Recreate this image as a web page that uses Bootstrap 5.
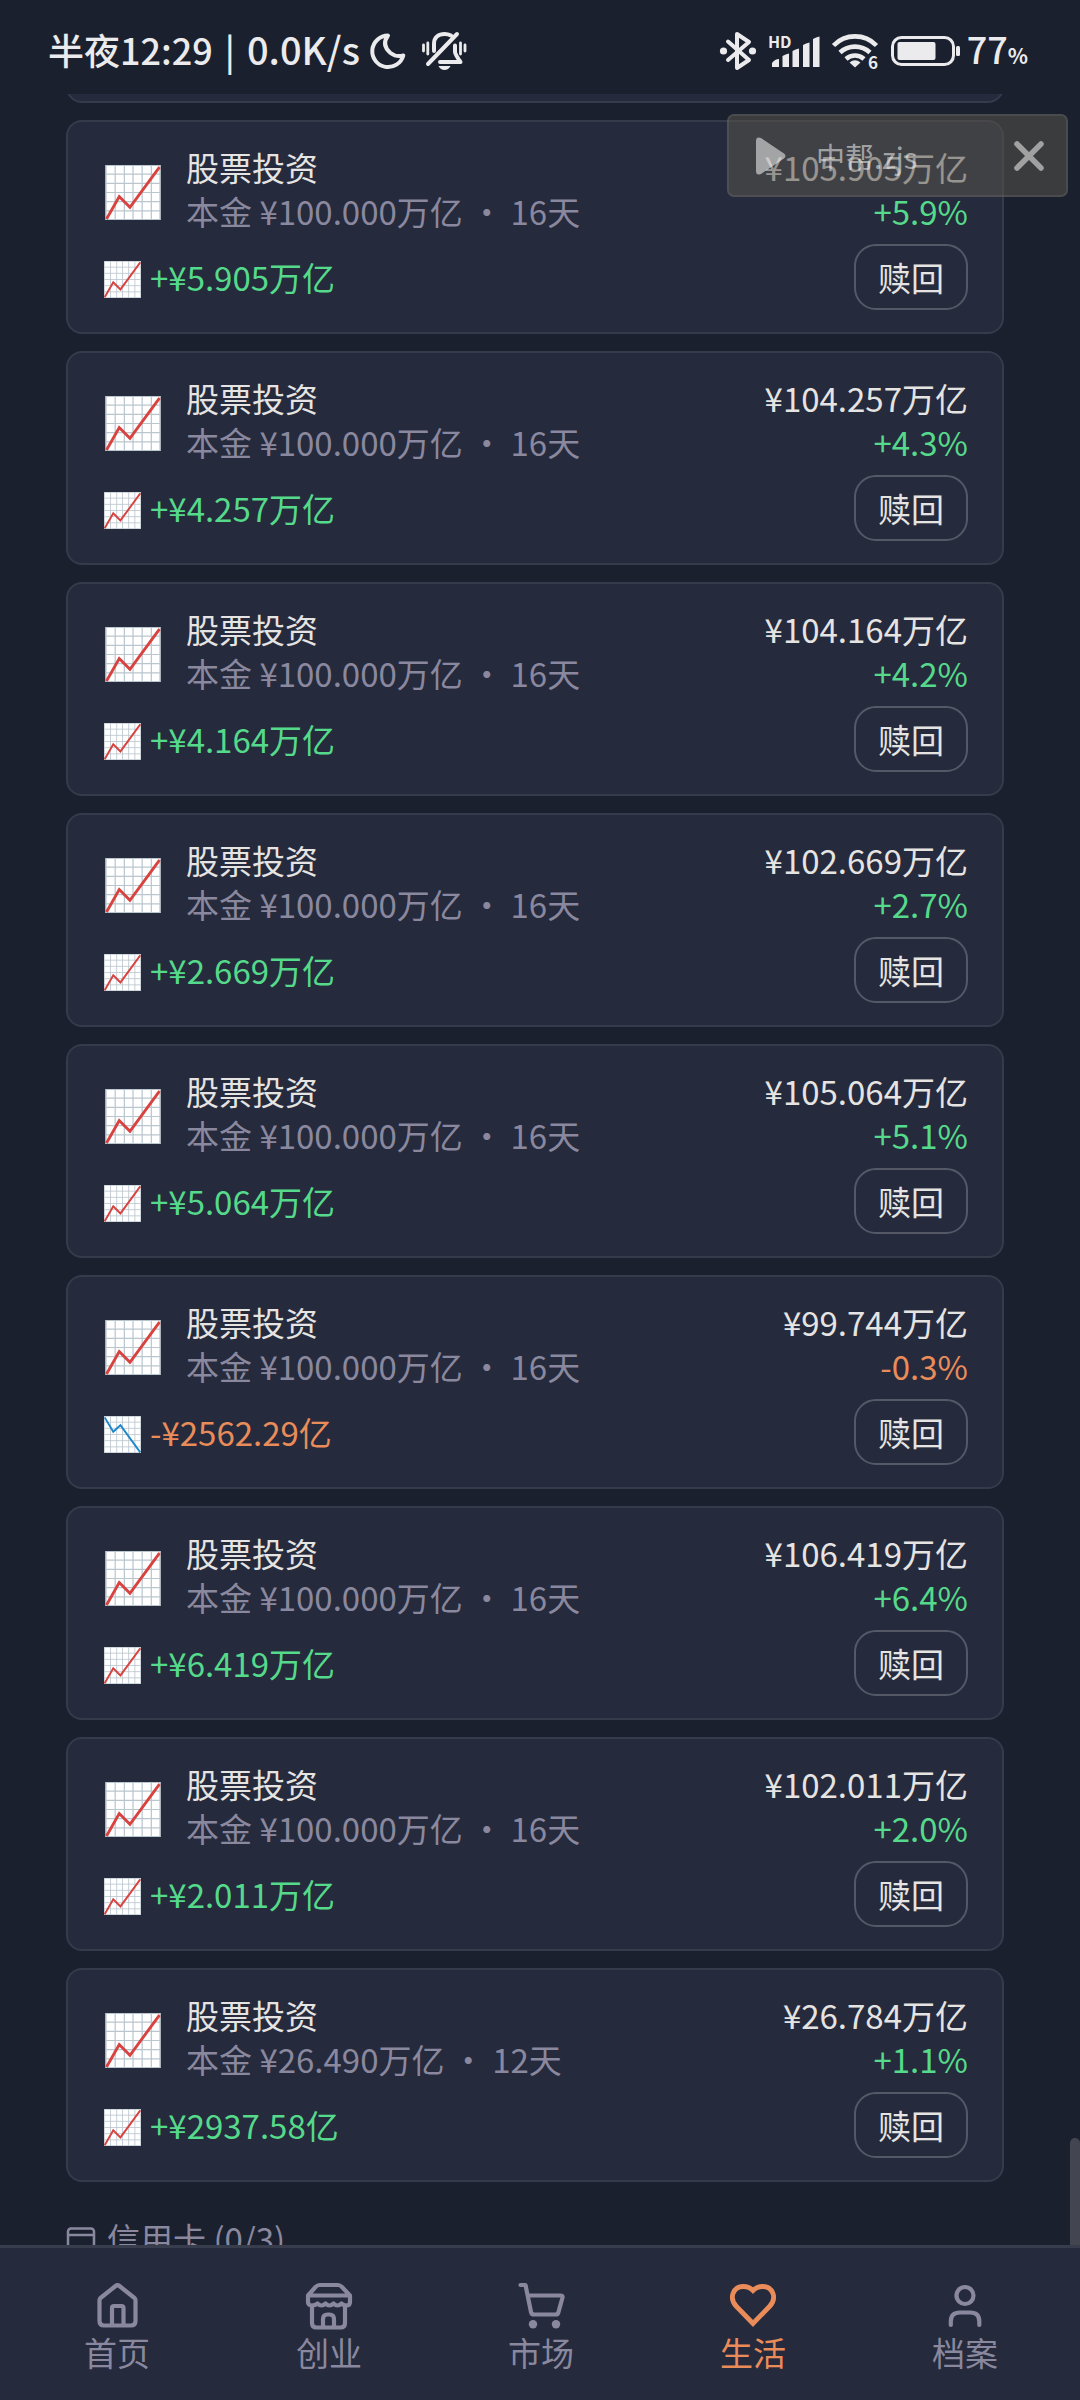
<!DOCTYPE html>
<html lang="zh-CN">
<head>
<meta charset="utf-8">
<meta name="viewport" content="width=device-width, initial-scale=1">
<title>生活</title>
<link href="https://cdn.jsdelivr.net/npm/bootstrap@5.3.0/dist/css/bootstrap.min.css" rel="stylesheet">
<style>
:root{--ink:#e6e4e2;--muted:#8a889e;--gain:#55d98a;--loss:#e98c5a;--panel:#252a3c;--line:#363b4b}
body{background:#1a202d;color:var(--ink);font:400 33px/44px "Noto Sans CJK SC",sans-serif}
svg{display:block;flex:none;overflow:visible}
.status-strip{height:94px;padding:8px 52px 0 48px;font-weight:500;font-size:36px;color:#ebebed}
.status-strip text{font-weight:700;font-family:"Noto Sans CJK SC",sans-serif}
.status-net{font-size:38px}
.status-clock{gap:12px;margin-top:-4px}
.status-left{gap:11px}
.status-left svg + svg{margin-left:5px}
.status-right{gap:13px}
.status-level{margin-left:-6px}
.status-pct{font-size:21px;font-weight:700}
.holdings{padding:0 76px 0 66px}
.holding{background:var(--panel);border:2px solid var(--line);border-radius:16px;padding:23px 34px 22px;margin-bottom:17px}
.holding-prev{height:214px;margin-top:-205px}
.holding-head{gap:22px;margin-bottom:11px}
.holding-head svg{width:62px;height:55px;margin-top:6px}
.profit{gap:9px;padding-left:2px}
.profit svg{width:37px;height:37px;margin-top:5px}
.muted-text{color:var(--muted)}
.gain{color:var(--gain)}
.loss{color:var(--loss)}
.btn-redeem{height:66px;padding:0 22px;border:2px solid #555867;border-radius:22px;color:var(--ink);font-size:33px;line-height:44px}
.btn-redeem:hover{color:#fff;border-color:var(--muted)}
.section-title{font-size:33px;line-height:44px;font-weight:400;color:var(--muted);margin:34px 0 0;gap:12px}
.thumb{right:0;bottom:0;width:10px;height:107px;border-radius:5px 5px 0 0;background:#434650}
.tabs{height:155px;background:var(--panel);border-top:3px solid #383d4e;padding:34px 9px 0 11px}
.tabs a{color:var(--muted);text-decoration:none}
.tabs a.active{color:var(--loss)}
.tabs svg{width:48px;height:48px}
.float-tip{top:114px;right:12px;width:341px;height:83px;z-index:3;border-radius:7px;border:2px solid rgba(255,255,255,.08);background:rgba(88,83,77,.55);color:rgba(255,255,255,.52);font-size:29px;padding:0 22px 0 27px}
.tip-name{margin-left:30px}
.tip-close{color:inherit;background:none;border:0;padding:0}
</style>
</head>
<body>
<svg width="0" height="0" class="position-absolute" aria-hidden="true">
<symbol id="up" viewBox="0 0 54 54"><path fill="#fff" d="M0 0h54v54H0z"/><path d="M.5 0v54M9.500 0v54M18.500 0v54M27 0v54M36 0v54M45 0v54M53.500 0v54M0 .5h54M0 9h54M0 18h54M0 27h54M0 36h54M0 45h54M0 53.500h54" stroke="#b9c6cd" stroke-width="1.200"/><path d="M1 53 13.500 31 24 41.500 53 2" fill="none" stroke="#d8423f" stroke-width="2.800"/></symbol>
<symbol id="down" viewBox="0 0 54 54"><path fill="#fff" d="M0 0h54v54H0z"/><path d="M.5 0v54M9.500 0v54M18.500 0v54M27 0v54M36 0v54M45 0v54M53.500 0v54M0 .5h54M0 9h54M0 18h54M0 27h54M0 36h54M0 45h54M0 53.500h54" stroke="#b9c6cd" stroke-width="1.200"/><path d="M1 2 13.500 23 24 13.500 53 53" fill="none" stroke="#1d87c9" stroke-width="2.800"/></symbol>
</svg>

<div class="d-flex flex-column vh-100 position-relative overflow-hidden">
<header class="status-strip d-flex justify-content-between align-items-center flex-shrink-0">
<div class="status-left d-flex align-items-center">
<div class="status-clock d-flex"><span>半夜12:29</span><span>|</span><span class="status-net">0.0K/s</span></div>
<svg width="35" height="36" viewBox="0 0 35 36" fill="none" stroke="currentColor" stroke-width="4" stroke-linecap="round" stroke-linejoin="round"><path d="M17 2.500A15.800 15.800 0 1 0 32.300 22.500Q25.500 24.500 19.500 20Q10 12 17 2.500z"/></svg>
<svg width="45" height="40" viewBox="0 0 45 40" fill="none" stroke="currentColor" stroke-width="4" stroke-linecap="round" stroke-linejoin="round"><path d="M35 3 6 33M12 20V13C12 6 17 3 22.500 3Q26 3 29 4.500M33 14.500V21Q33.500 24 38.500 31H18"/><path d="M1.500 14v6M5.800 12v11M38.500 12v11M43 14v6" stroke-width="2.800"/><path d="M16.500 35h12q-2 4-6 4t-6-4z" fill="currentColor" stroke="none"/></svg>
</div>
<div class="status-right d-flex align-items-center">
<svg width="36" height="38" viewBox="0 0 36 38" fill="none" stroke="currentColor" stroke-width="4" stroke-linejoin="round" stroke-linecap="round"><path d="M8 9.500 29 28 17 36V2L29 10 8 28"/><circle cx="3.500" cy="19" r="3.600" fill="currentColor" stroke="none"/><circle cx="32.500" cy="19" r="3.600" fill="currentColor" stroke="none"/></svg>
<svg width="50" height="34" viewBox="0 0 50 34" fill="currentColor"><text x="-1" y="14" font-size="16">HD</text><path d="M3 33v-4q3-4 7-4v8zM13.500 33V22q3-2 6.500-2.500V33zM23.500 33V17q3-2 6.500-2.500V33zM34 33V11q3-2 6.500-2.500V33zM44 33V5q3-2 6.500-2.500V33z"/></svg>
<svg width="46" height="36" viewBox="0 0 46 36" fill="none" stroke="currentColor" stroke-width="4.600"><path d="M1.500 12.500A30 30 0 0 1 44.500 12.500M8 19.500A22 22 0 0 1 38 19.500M14 26A13.500 13.500 0 0 1 32 26"/><path d="M23 34.500 17.500 29.500Q23 25 28.500 29.500z" fill="currentColor" stroke="none"/><text x="36" y="36" font-size="17" fill="currentColor" stroke="none">6</text></svg>
<svg width="69" height="30" viewBox="0 0 69 30"><rect x="1.500" y="1.500" width="61" height="27" rx="9" fill="none" stroke="currentColor" stroke-width="3"/><rect x="6.500" y="6" width="38" height="18" rx="2" fill="currentColor"/><rect x="65" y="10" width="4" height="10" rx="1.500" fill="currentColor"/></svg>
<span class="status-level">77<span class="status-pct">%</span></span>
</div>
</header>

<main class="holdings flex-grow-1 overflow-hidden position-relative">
<div class="holding holding-prev"></div>

<article class="holding"><div class="holding-head d-flex align-items-center"><svg><use href="#up"/></svg><div class="flex-grow-1"><div>股票投资</div><div class="muted-text">本金 ¥100.000万亿 • 16天</div></div><div class="text-end"><div>¥105.905万亿</div><div class="gain">+5.9%</div></div></div><div class="d-flex justify-content-between align-items-center"><div class="profit gain d-flex align-items-center"><svg><use href="#up"/></svg><span>+¥5.905万亿</span></div><button type="button" class="btn btn-redeem">赎回</button></div></article>

<article class="holding"><div class="holding-head d-flex align-items-center"><svg><use href="#up"/></svg><div class="flex-grow-1"><div>股票投资</div><div class="muted-text">本金 ¥100.000万亿 • 16天</div></div><div class="text-end"><div>¥104.257万亿</div><div class="gain">+4.3%</div></div></div><div class="d-flex justify-content-between align-items-center"><div class="profit gain d-flex align-items-center"><svg><use href="#up"/></svg><span>+¥4.257万亿</span></div><button type="button" class="btn btn-redeem">赎回</button></div></article>

<article class="holding"><div class="holding-head d-flex align-items-center"><svg><use href="#up"/></svg><div class="flex-grow-1"><div>股票投资</div><div class="muted-text">本金 ¥100.000万亿 • 16天</div></div><div class="text-end"><div>¥104.164万亿</div><div class="gain">+4.2%</div></div></div><div class="d-flex justify-content-between align-items-center"><div class="profit gain d-flex align-items-center"><svg><use href="#up"/></svg><span>+¥4.164万亿</span></div><button type="button" class="btn btn-redeem">赎回</button></div></article>

<article class="holding"><div class="holding-head d-flex align-items-center"><svg><use href="#up"/></svg><div class="flex-grow-1"><div>股票投资</div><div class="muted-text">本金 ¥100.000万亿 • 16天</div></div><div class="text-end"><div>¥102.669万亿</div><div class="gain">+2.7%</div></div></div><div class="d-flex justify-content-between align-items-center"><div class="profit gain d-flex align-items-center"><svg><use href="#up"/></svg><span>+¥2.669万亿</span></div><button type="button" class="btn btn-redeem">赎回</button></div></article>

<article class="holding"><div class="holding-head d-flex align-items-center"><svg><use href="#up"/></svg><div class="flex-grow-1"><div>股票投资</div><div class="muted-text">本金 ¥100.000万亿 • 16天</div></div><div class="text-end"><div>¥105.064万亿</div><div class="gain">+5.1%</div></div></div><div class="d-flex justify-content-between align-items-center"><div class="profit gain d-flex align-items-center"><svg><use href="#up"/></svg><span>+¥5.064万亿</span></div><button type="button" class="btn btn-redeem">赎回</button></div></article>

<article class="holding"><div class="holding-head d-flex align-items-center"><svg><use href="#up"/></svg><div class="flex-grow-1"><div>股票投资</div><div class="muted-text">本金 ¥100.000万亿 • 16天</div></div><div class="text-end"><div>¥99.744万亿</div><div class="loss">-0.3%</div></div></div><div class="d-flex justify-content-between align-items-center"><div class="profit loss d-flex align-items-center"><svg><use href="#down"/></svg><span>-¥2562.29亿</span></div><button type="button" class="btn btn-redeem">赎回</button></div></article>

<article class="holding"><div class="holding-head d-flex align-items-center"><svg><use href="#up"/></svg><div class="flex-grow-1"><div>股票投资</div><div class="muted-text">本金 ¥100.000万亿 • 16天</div></div><div class="text-end"><div>¥106.419万亿</div><div class="gain">+6.4%</div></div></div><div class="d-flex justify-content-between align-items-center"><div class="profit gain d-flex align-items-center"><svg><use href="#up"/></svg><span>+¥6.419万亿</span></div><button type="button" class="btn btn-redeem">赎回</button></div></article>

<article class="holding"><div class="holding-head d-flex align-items-center"><svg><use href="#up"/></svg><div class="flex-grow-1"><div>股票投资</div><div class="muted-text">本金 ¥100.000万亿 • 16天</div></div><div class="text-end"><div>¥102.011万亿</div><div class="gain">+2.0%</div></div></div><div class="d-flex justify-content-between align-items-center"><div class="profit gain d-flex align-items-center"><svg><use href="#up"/></svg><span>+¥2.011万亿</span></div><button type="button" class="btn btn-redeem">赎回</button></div></article>

<article class="holding"><div class="holding-head d-flex align-items-center"><svg><use href="#up"/></svg><div class="flex-grow-1"><div>股票投资</div><div class="muted-text">本金 ¥26.490万亿 • 12天</div></div><div class="text-end"><div>¥26.784万亿</div><div class="gain">+1.1%</div></div></div><div class="d-flex justify-content-between align-items-center"><div class="profit gain d-flex align-items-center"><svg><use href="#up"/></svg><span>+¥2937.58亿</span></div><button type="button" class="btn btn-redeem">赎回</button></div></article>

<h2 class="section-title d-flex align-items-center"><svg width="29" height="22" viewBox="0 0 29 22" fill="none" stroke="currentColor" stroke-width="2.500"><rect x="2" y="1.500" width="26" height="18.500" rx="3"/><path d="M2 8h26"/></svg><span>信用卡 (0/3)</span></h2>
<div class="thumb position-absolute"></div>
</main>

<nav class="tabs d-flex flex-shrink-0" aria-label="主导航">
<a href="#" class="d-flex flex-column align-items-center flex-fill w-100"><svg viewBox="0 0 48 48" fill="none" stroke="currentColor" stroke-width="4.200" stroke-linejoin="round" stroke-linecap="round"><path d="M6.500 18q0-1 1-2L22.500 4q2-1.500 4 0L41.500 16q1 1 1 2V39q0 4.500-4.500 4.500H11q-4.500 0-4.500-4.500z"/><path d="M19 43V26q0-2 2-2h7.500q2 0 2 2v17"/></svg><span>首页</span></a>
<a href="#" class="d-flex flex-column align-items-center flex-fill w-100"><svg viewBox="0 0 48 48" fill="none" stroke="currentColor" stroke-width="4.200" stroke-linejoin="round" stroke-linecap="round"><path d="M3 13.500 10.500 5q2-2 4-2h18.500q2 0 4 2L45 13.500V20q0 3.500-3.500 3.500-3 0-5-2-2 2-4 2t-4-2q-2 2-4 2t-4-2q-2 2-4 2t-4-2q-2 2-6 2-3.500 0-3.500-3.500zH45"/><path d="M7 24v17q0 4.500 4.500 4.500h24q4.500 0 4.500-4.500V24M18 45V37q0-4.500 4.500-4.500h2q4.500 0 4.500 4.500v8"/></svg><span>创业</span></a>
<a href="#" class="d-flex flex-column align-items-center flex-fill w-100"><svg viewBox="0 0 48 48" fill="none" stroke="currentColor" stroke-width="4.200" stroke-linejoin="round" stroke-linecap="round"><path d="M3.500 3H8.500L14 30q.5 2.500 3 2.500h21.500q2.500 0 3-2.500L45.500 15.500q.5-2-2-2H11"/><circle cx="16" cy="42.300" r="4.200" fill="currentColor" stroke="none"/><circle cx="39" cy="42.300" r="4.200" fill="currentColor" stroke="none"/></svg><span>市场</span></a>
<a href="#" class="active d-flex flex-column align-items-center flex-fill w-100" aria-current="page"><svg viewBox="0 0 48 48" fill="none" stroke="currentColor" stroke-width="4.800"><path d="M24 41.500 7.500 24.500C-.5 16 4 4.500 14.500 4.500Q20 4.500 24 8.500Q28 4.500 33.500 4.500C44 4.500 48.500 16 40.500 24.500z"/></svg><span>生活</span></a>
<a href="#" class="d-flex flex-column align-items-center flex-fill w-100"><svg viewBox="0 0 48 48" fill="none" stroke="currentColor" stroke-width="4.200" stroke-linecap="round"><circle cx="24" cy="13.500" r="8.500"/><path d="M9.800 43V39.500q0-9 9-9h10.500q9 0 9 9V43"/></svg><span>档案</span></a>
</nav>

<div class="float-tip position-absolute d-flex align-items-center">
<svg width="30" height="38" viewBox="0 0 30 38" fill="currentColor"><path d="M0 4Q0-1 5 1L28 16.500Q31 19 28 21.500L5 37Q0 39 0 34z"/></svg>
<span class="tip-name">中帮.zjs</span>
<button type="button" class="tip-close ms-auto" aria-label="关闭"><svg width="30" height="30" viewBox="0 0 30 30" fill="none" stroke="currentColor" stroke-width="5.500" stroke-linecap="round"><path d="M3 3 27 27M27 3 3 27"/></svg></button>
</div>
</div>
<script src="https://cdn.jsdelivr.net/npm/bootstrap@5.3.0/dist/js/bootstrap.bundle.min.js"></script>
</body>
</html>
